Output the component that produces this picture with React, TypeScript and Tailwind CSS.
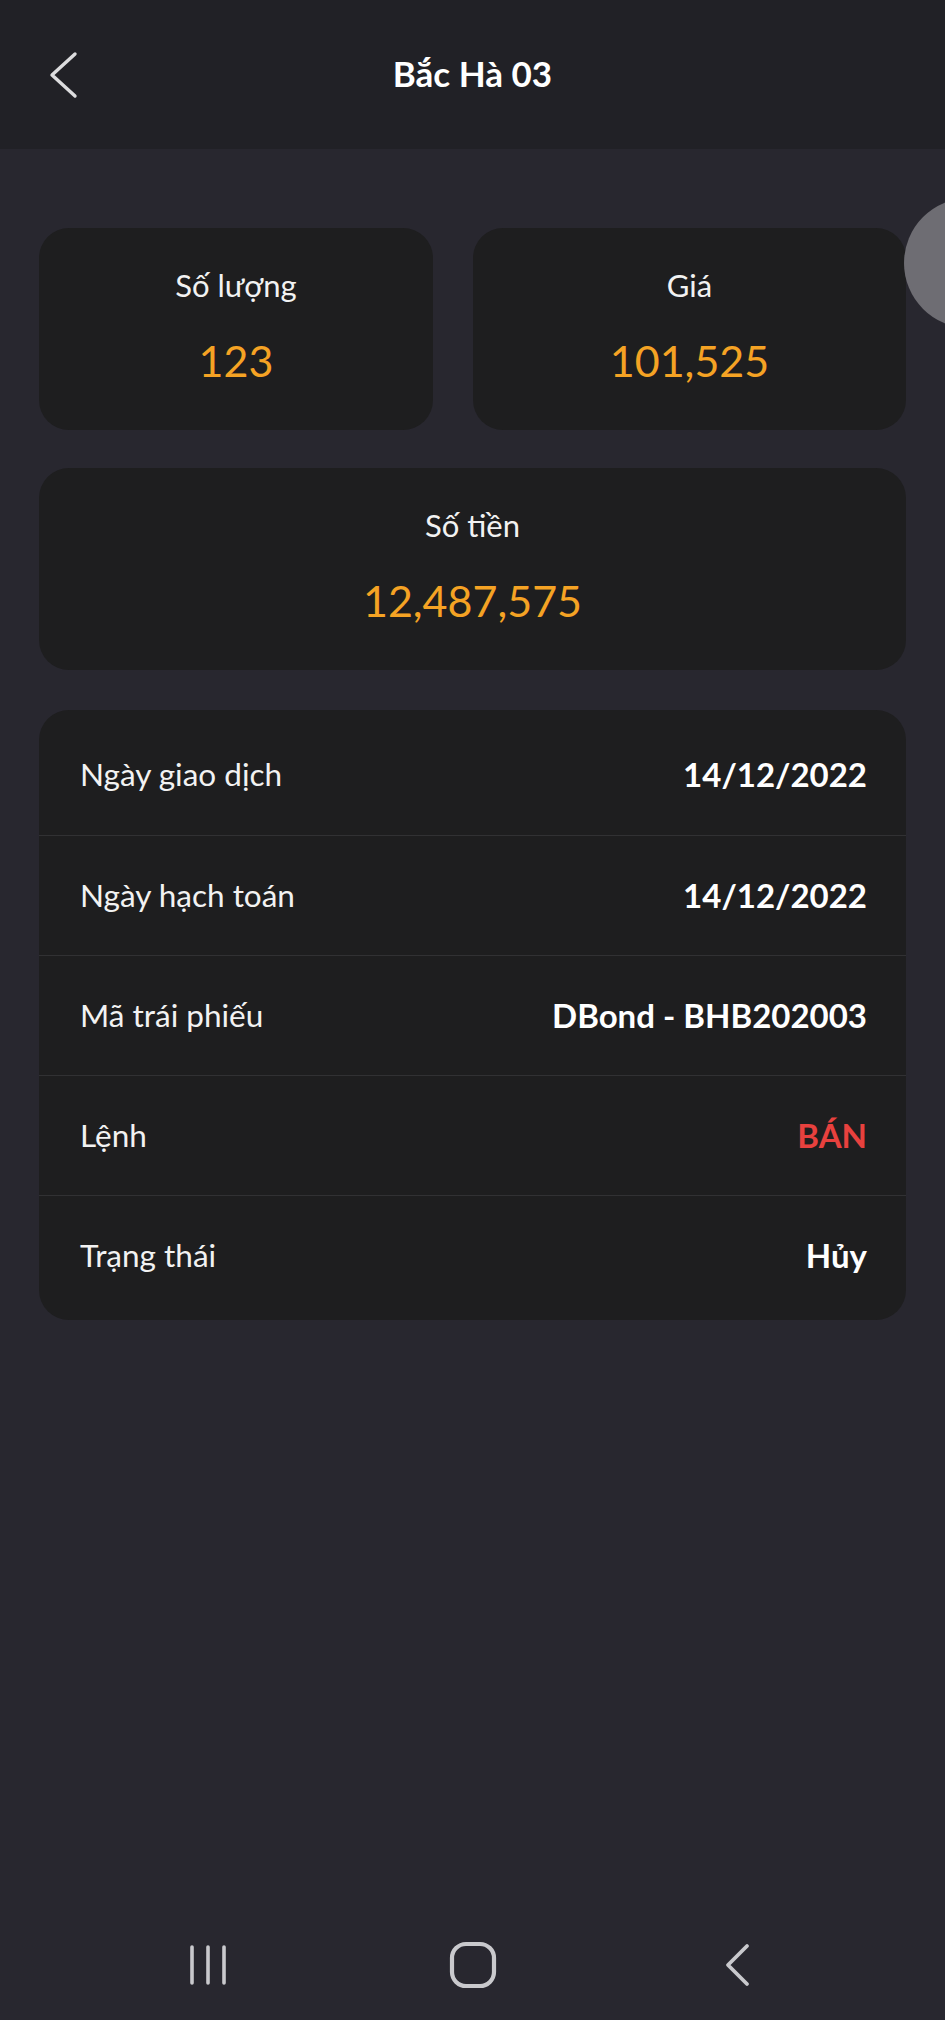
import React from "react";

const rows: { label: string; value: string; color?: string }[] = [
  { label: "Ngày giao dịch", value: "14/12/2022" },
  { label: "Ngày hạch toán", value: "14/12/2022" },
  { label: "Mã trái phiếu", value: "DBond - BHB202003" },
  { label: "Lệnh", value: "BÁN", color: "text-[#e8413e]" },
  { label: "Trạng thái", value: "Hủy" },
];

function StatCard({ label, value, className }: { label: string; value: string; className?: string }) {
  return (
    <div className={"h-[202px] rounded-[30px] bg-[#1e1e1f] flex flex-col items-center " + (className ?? "")}>
      <div className="pt-[38px] text-[31px] leading-[38px] text-[#f2f2f2]">{label}</div>
      <div className="mt-[30px] text-[43px] leading-[54px] text-[#f5a324]">{value}</div>
    </div>
  );
}

export default function App() {
  return (
    <div
      className="relative w-[945px] h-[2020px] overflow-hidden bg-[#28272f] flex flex-col"
      style={{ fontFamily: 'Lato, "Noto Sans", sans-serif' }}
    >
      <header className="h-[149px] bg-[#212126] grid grid-cols-[1fr_auto_1fr] items-center">
        <div className="pl-[48px] flex items-center">
          <svg width="32" height="50" viewBox="0 0 32 50" fill="none">
            <polyline
              points="27,4 4,25 27,46"
              stroke="#dcdcde"
              strokeWidth="3.4"
              strokeLinecap="round"
              strokeLinejoin="round"
            />
          </svg>
        </div>
        <h1 className="text-[35px] font-bold text-white leading-none pb-[2px]">Bắc Hà 03</h1>
        <div />
      </header>

      <main className="px-[39px] pt-[79px] flex flex-col">
        <div className="flex gap-[40px]">
          <StatCard label="Số lượng" value="123" className="w-[394px]" />
          <StatCard label="Giá" value="101,525" className="flex-1" />
        </div>
        <StatCard label="Số tiền" value="12,487,575" className="mt-[38px]" />

        <div className="mt-[40px] rounded-[30px] bg-[#1e1e1f] pt-[5px] pb-[5px]">
          {rows.map((r, i) => (
            <div
              key={r.label}
              className={
                "h-[120px] flex items-center justify-between pl-[41px] pr-[39px] " +
                (i > 0 ? "border-t border-[#313133]" : "")
              }
            >
              <span className="text-[31.5px] text-[#f2f2f2]">{r.label}</span>
              <span className={"text-[33px] font-bold " + (r.color ?? "text-white")}>{r.value}</span>
            </div>
          ))}
        </div>
      </main>

      <nav className="mt-auto h-[110px] flex items-center justify-center gap-[205px]">
        <div className="w-[60px] flex justify-center">
          <svg width="44" height="44" viewBox="0 0 44 44" fill="none">
            <line x1="6" y1="4" x2="6" y2="40" stroke="#c9c9cd" strokeWidth="3.6" strokeLinecap="round" />
            <line x1="22" y1="4" x2="22" y2="40" stroke="#c9c9cd" strokeWidth="3.6" strokeLinecap="round" />
            <line x1="38" y1="4" x2="38" y2="40" stroke="#c9c9cd" strokeWidth="3.6" strokeLinecap="round" />
          </svg>
        </div>
        <div className="w-[60px] flex justify-center">
          <svg width="48" height="48" viewBox="0 0 48 48" fill="none">
            <rect x="3" y="3" width="42" height="42" rx="14" stroke="#c9c9cd" strokeWidth="4.2" />
          </svg>
        </div>
        <div className="w-[60px] flex justify-center">
          <svg width="30" height="44" viewBox="0 0 30 44" fill="none">
            <polyline
              points="24,3 5,22 24,41"
              stroke="#c9c9cd"
              strokeWidth="3.8"
              strokeLinecap="round"
              strokeLinejoin="round"
            />
          </svg>
        </div>
      </nav>

      <div className="absolute left-[904px] top-[198px] w-[130px] h-[130px] rounded-full bg-[#6e6d73]" />
    </div>
  );
}
